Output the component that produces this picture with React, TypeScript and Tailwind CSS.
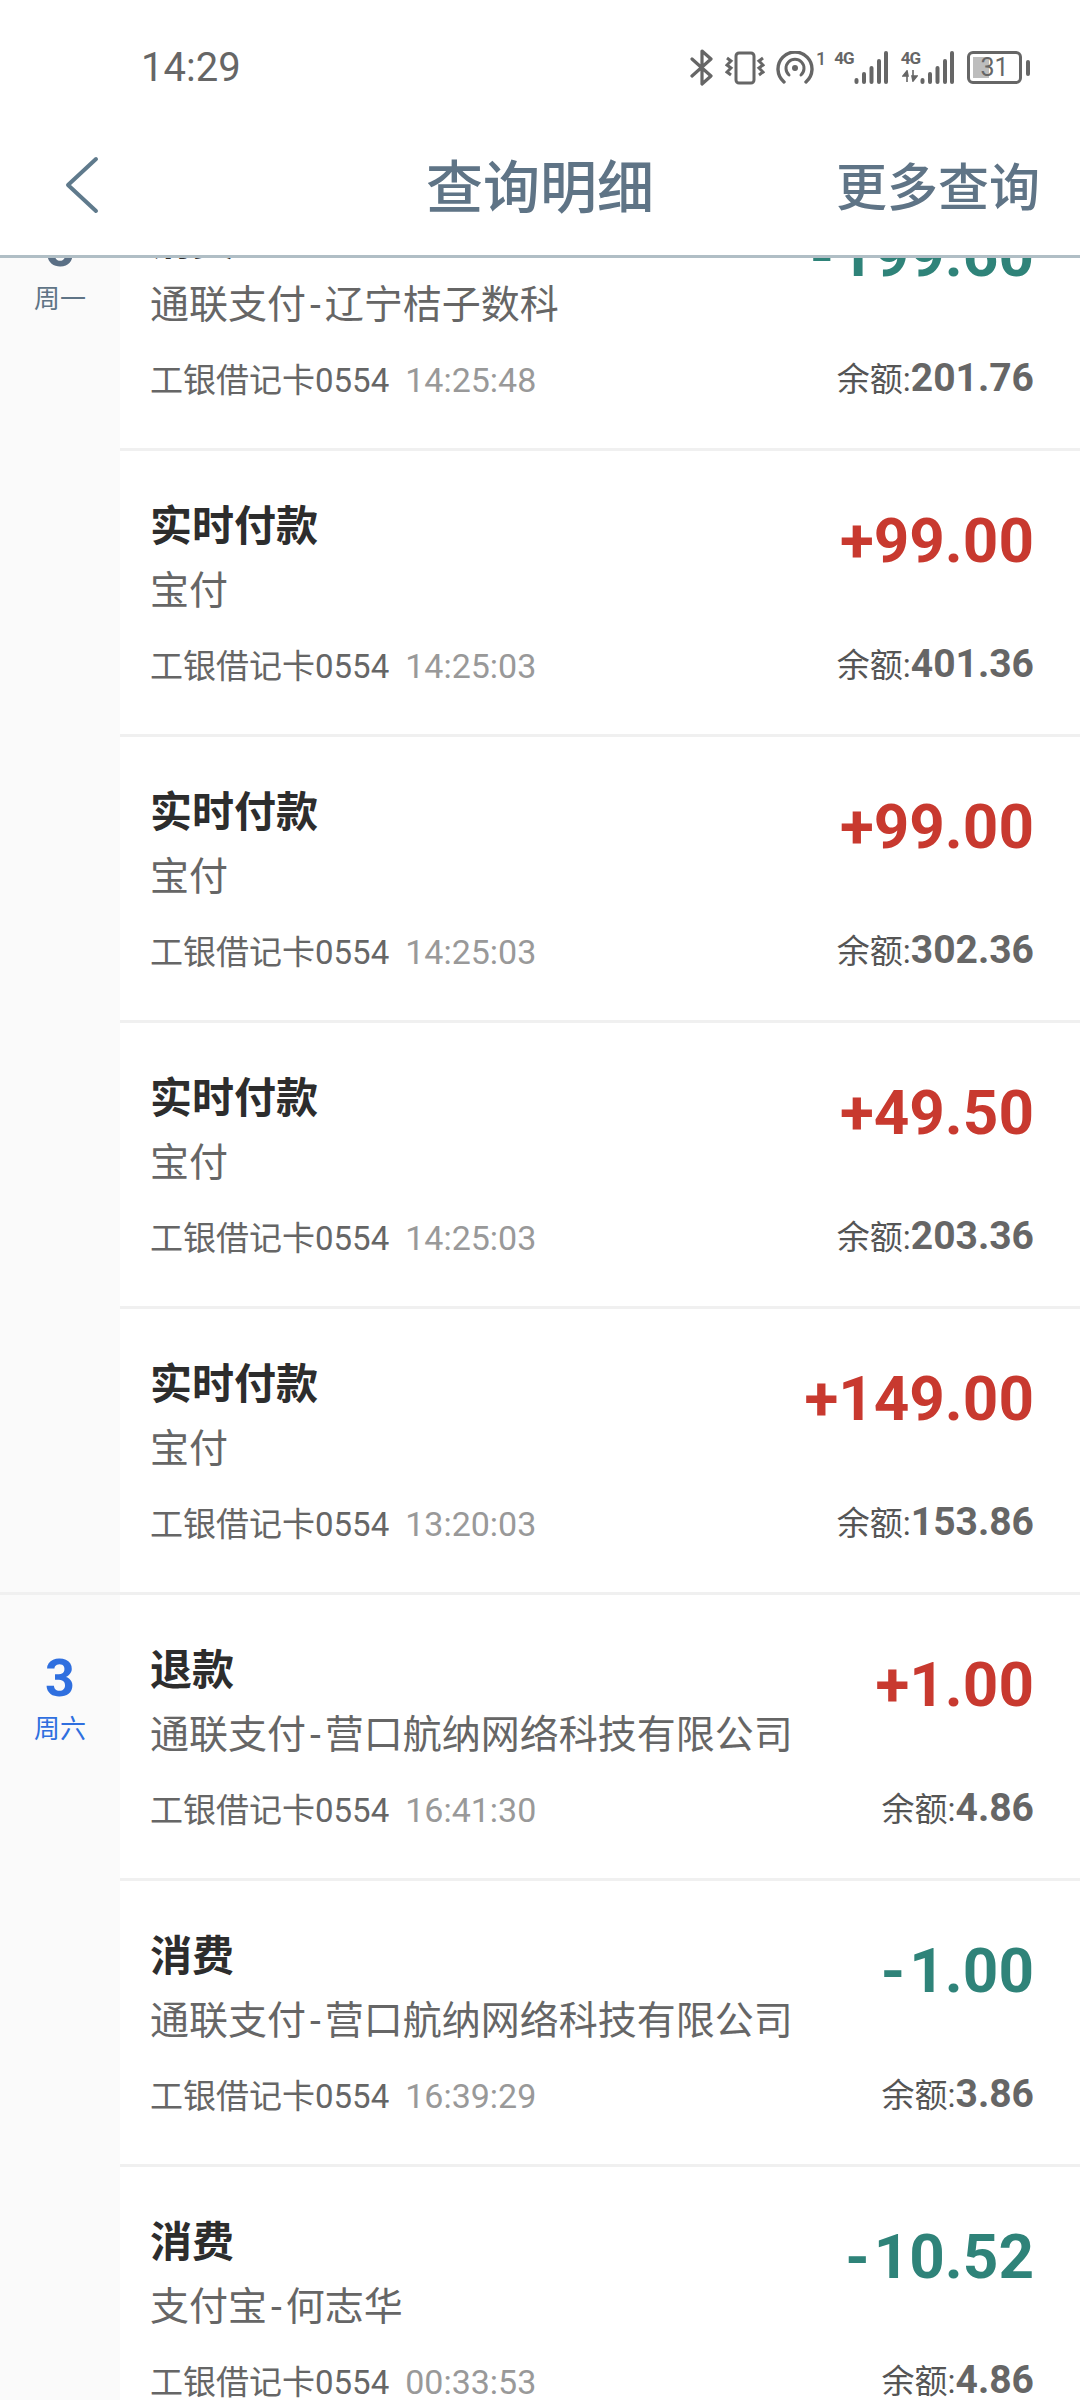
const font = "font-['Roboto','Noto_Sans_CJK_SC',sans-serif]";

type Tx = {
  title: string;
  merchant: string;
  time: string;
  amount: string;
  balance: string;
};

const mondayRows: Tx[] = [
  { title: '消费', merchant: '通联支付-辽宁桔子数科', time: '14:25:48', amount: '-199.60', balance: '201.76' },
  { title: '实时付款', merchant: '宝付', time: '14:25:03', amount: '+99.00', balance: '401.36' },
  { title: '实时付款', merchant: '宝付', time: '14:25:03', amount: '+99.00', balance: '302.36' },
  { title: '实时付款', merchant: '宝付', time: '14:25:03', amount: '+49.50', balance: '203.36' },
  { title: '实时付款', merchant: '宝付', time: '13:20:03', amount: '+149.00', balance: '153.86' },
];

const saturdayRows: Tx[] = [
  { title: '退款', merchant: '通联支付-营口航纳网络科技有限公司', time: '16:41:30', amount: '+1.00', balance: '4.86' },
  { title: '消费', merchant: '通联支付-营口航纳网络科技有限公司', time: '16:39:29', amount: '-1.00', balance: '3.86' },
  { title: '消费', merchant: '支付宝-何志华', time: '00:33:53', amount: '-10.52', balance: '4.86' },
];

function Signal() {
  return (
    <svg width="34" height="34" viewBox="0 0 34 34" className="block">
      <g stroke="#666" strokeWidth="4" strokeLinecap="round">
        <path d="M2.5 32v-2" />
        <path d="M10 32v-8" />
        <path d="M17.5 32v-14" />
        <path d="M25 32v-21" />
        <path d="M32 32v-29" />
      </g>
    </svg>
  );
}

function FourG() {
  return <span className="block text-[17px] leading-[16px] font-bold tracking-[-1px] text-[#666]">4G</span>;
}

function StatusIcons() {
  return (
    <div className="flex h-[36px] items-center">
      <svg width="24" height="37" viewBox="0 0 24 37" className="block">
        <path d="M2 10l19 17-9 8V2l9 8L2 27" fill="none" stroke="#666" strokeWidth="3.2" strokeLinecap="round" strokeLinejoin="round" />
      </svg>
      <svg width="40" height="34" viewBox="0 0 40 34" className="block ml-[11px]">
        <rect x="11" y="2" width="18" height="30" rx="3" fill="none" stroke="#666" strokeWidth="3" />
        <path d="M2 7l4 3-4 4 4 3-4 4 4 3" fill="none" stroke="#666" strokeWidth="3" />
        <path d="M38 7l-4 3 4 4-4 3 4 4-4 3" fill="none" stroke="#666" strokeWidth="3" />
      </svg>
      <svg width="38" height="34" viewBox="0 0 38 34" className="block ml-[11px]">
        <path d="M8 31a17 17 0 1 1 22 0" fill="none" stroke="#666" strokeWidth="3.4" strokeLinecap="round" />
        <path d="M13 24a9 9 0 1 1 12 0" fill="none" stroke="#666" strokeWidth="3" strokeLinecap="round" />
        <circle cx="19" cy="17" r="3" fill="#666" />
      </svg>
      <span className="ml-[2px] self-start text-[18px] leading-[18px] font-medium text-[#666]">1</span>
      <div className="ml-[8px] flex h-[36px] items-start">
        <FourG />
        <Signal />
      </div>
      <div className="ml-[13px] flex h-[36px] items-start">
        <div className="flex flex-col items-center">
          <FourG />
          <svg width="16" height="12" viewBox="0 0 16 12" className="block mt-[4px]">
            <path d="M5 12V5M1 6l4-5 1 5zM11 0v7M15 6l-4 5-1-5z" stroke="#666" strokeWidth="1.6" fill="#666" />
          </svg>
        </div>
        <Signal />
      </div>
      <div className="ml-[13px] flex items-center">
        <div className="relative flex h-[33px] w-[55px] items-center justify-center rounded-[6px] border-[3px] border-[#666]">
          <div className="absolute bottom-[3px] left-[3px] top-[3px] w-[16px] bg-[#bdbdbd]" />
          <span className="relative text-[25px] leading-[24px] text-[#666]">31</span>
        </div>
        <div className="ml-[4px] h-[16px] w-[4px] rounded-full bg-[#666]" />
      </div>
    </div>
  );
}

function Header() {
  return (
    <header className="relative z-10 h-[258px] border-b-[3px] border-[#b0bec5] bg-white">
      <div className="flex h-[132px] items-center justify-between pl-[141px] pr-[50px] pt-[3px]">
        <span className="text-[40px] leading-[48px] text-[#666]">14:29</span>
        <StatusIcons />
      </div>
      <nav className="grid h-[108px] grid-cols-[1fr_auto_1fr] items-center px-[40px] pt-[5px]">
        <svg width="36" height="58" viewBox="0 0 36 58" className="-mt-[7px] ml-[24px] block">
          <path d="M32 3L4 29l28 26" fill="none" stroke="#5f7a8c" strokeWidth="4" strokeLinecap="round" strokeLinejoin="round" />
        </svg>
        <h1 className="text-[57px] leading-[70px] font-medium text-[#5f7486]">查询明细</h1>
        <span className="justify-self-end text-[51px] leading-[70px] font-medium text-[#5f7486]">更多查询</span>
      </nav>
    </header>
  );
}

function Merchant({ name }: { name: string }) {
  const [before, after] = name.split('-');
  return (
    <>
      {before}
      <span className="mx-[4px]">-</span>
      {after}
    </>
  );
}

function Row({ tx }: { tx: Tx }) {
  const negative = tx.amount.startsWith('-');
  return (
    <div className="h-[286px] border-b-[3px] border-[#f0f0f0] pl-[30px] pr-[46px] pt-[51px]">
      <div className="flex h-[189px] justify-between">
        <div className="flex flex-col">
          <div className="text-[42px] leading-[50px] font-bold text-[#2d2d2d]">{tx.title}</div>
          <div className="mt-[14px] text-[39px] leading-[50px] text-[#666]">
            {tx.merchant.includes('-') ? <Merchant name={tx.merchant} /> : tx.merchant}
          </div>
          <div className="mt-[25px] text-[33px] leading-[50px] text-[#666]">
            工银借记卡0554
            <span className="ml-[16px] text-[34px] text-[#999]">{tx.time}</span>
          </div>
        </div>
        <div className="flex flex-col items-end justify-between">
          {negative ? (
            <div className="mt-[9px] text-[62px] leading-[60px] font-bold text-[#2f8379]">
              <span className="mr-[4px]">-</span>
              {tx.amount.slice(1)}
            </div>
          ) : (
            <div className="mt-[9px] text-[62px] leading-[60px] font-bold text-[#c8392f]">{tx.amount}</div>
          )}
          <div className="text-[33px] leading-[50px] text-[#555]">
            余额:<span className="text-[39px] font-bold text-[#666]">{tx.balance}</span>
          </div>
        </div>
      </div>
    </div>
  );
}

function DayGroup({ day, week, rows, active }: { day: string; week: string; rows: Tx[]; active?: boolean }) {
  return (
    <section className="flex">
      <div className="flex w-[120px] shrink-0 flex-col items-center border-b-[3px] border-[#f0f0f0] bg-[#fafafa] pt-[54px]">
        <div className={`text-[52px] leading-[60px] font-bold ${active ? 'text-[#2f6fdf]' : 'text-[#5a6f85]'}`}>{day}</div>
        <div className={`mt-[2px] text-[26px] leading-[36px] ${active ? 'text-[#2f6fdf]' : 'text-[#5f7486]'}`}>{week}</div>
      </div>
      <div className="min-w-0 flex-1">
        {rows.map((tx, i) => (
          <Row key={i} tx={tx} />
        ))}
      </div>
    </section>
  );
}

export default function App() {
  return (
    <div className={`h-[2400px] w-[1080px] overflow-hidden bg-white ${font}`}>
      <Header />
      <main className="-mt-[93px]">
        <DayGroup day="5" week="周一" rows={mondayRows} />
        <DayGroup day="3" week="周六" rows={saturdayRows} active />
      </main>
    </div>
  );
}
